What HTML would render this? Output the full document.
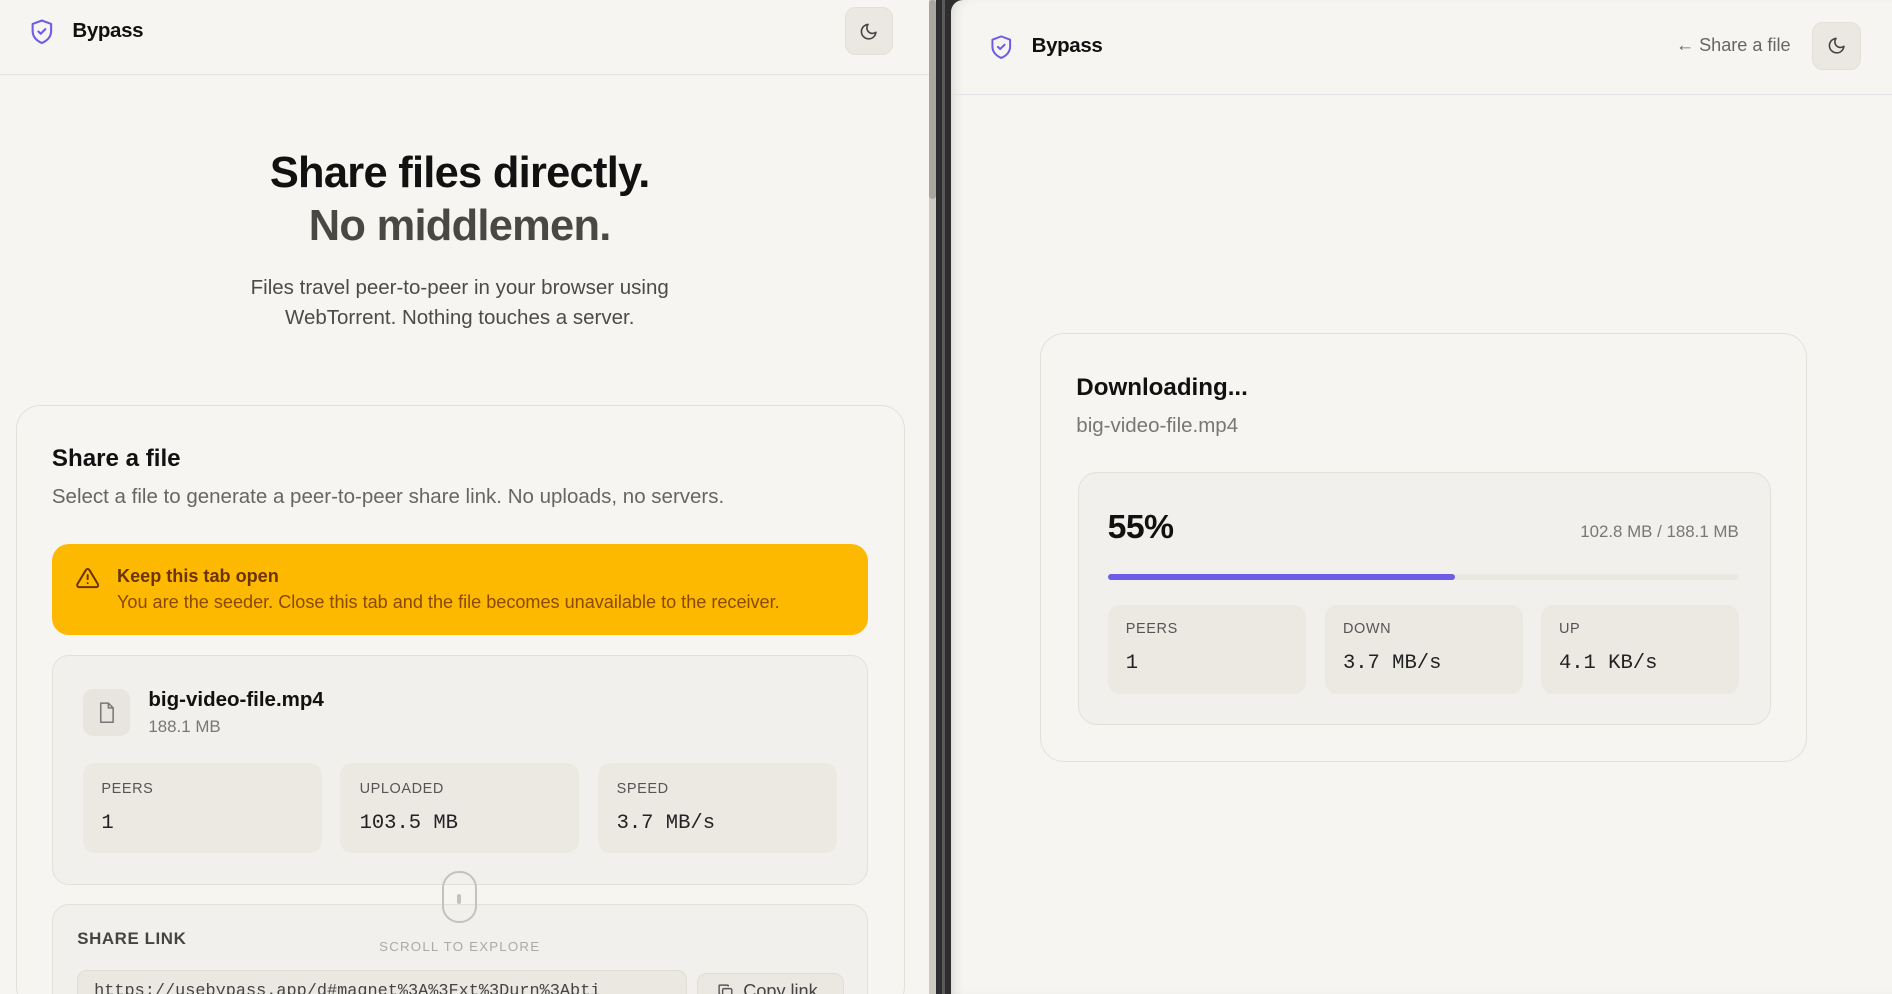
<!DOCTYPE html>
<html><head><meta charset="utf-8"><style>
html,body{margin:0;padding:0;}
body{width:1568px;height:824px;overflow:hidden;position:relative;zoom:1.20663;background:#2e2e2e;font-family:"Liberation Sans",sans-serif;color:#111;}
.a{position:absolute;}
.pane{background:#f7f5f1;overflow:hidden;}
.hdr{border-bottom:1px solid #e4e1e6;}
.moon{background:#ebe8e2;border-radius:9px;border:1px solid #e2dfd8;box-sizing:border-box;}
.brand{font-weight:bold;font-size:17px;letter-spacing:-0.3px;}
.stat{background:#ece9e3;border-radius:10px;}
.lbl{font-size:12px;color:#555;letter-spacing:0.5px;}
.val{font-family:"Liberation Mono",monospace;font-size:17px;color:#222;}
.c{text-align:center;}
</style></head><body>
<!-- left pane -->
<div class="a pane" style="left:0;top:0;width:770px;height:824px;">
  <div class="a hdr" style="left:0;top:0;width:770px;height:61px;"></div>
  <svg class="a" style="left:23px;top:14px" width="23" height="24" viewBox="0 0 24 24" fill="none" stroke="#6c5ce7" stroke-width="1.8" stroke-linejoin="round" stroke-linecap="round"><path d="M12 2.5 20 5.5v6c0 5-3.5 8.5-8 10.5-4.5-2-8-5.5-8-10.5v-6z"/><path d="M9 12l2 2 4-4"/></svg>
  <div class="a brand" style="left:60px;top:16px;">Bypass</div>
  <div class="a moon" style="left:700px;top:6px;width:40px;height:40px;"></div>
  <svg class="a" style="left:712px;top:18px" width="16" height="16" viewBox="0 0 24 24" fill="none" stroke="#444" stroke-width="2" stroke-linecap="round" stroke-linejoin="round"><path d="M21 12.8A9 9 0 1 1 11.2 3a7 7 0 0 0 9.8 9.8z"/></svg>

  <div class="a c" style="left:0;width:762px;top:122px;font-size:36px;font-weight:bold;letter-spacing:-0.6px;line-height:44px;">Share files directly.<br><span style="color:#4a4843">No middlemen.</span></div>
  <div class="a c" style="left:0;width:762px;top:226px;font-size:17px;line-height:25px;color:#4d4b47;">Files travel peer-to-peer in your browser using<br>WebTorrent. Nothing touches a server.</div>

  <div class="a" style="left:13px;top:336px;width:735px;height:500px;border:1px solid #e3e0da;border-radius:20px;"></div>
  <div class="a" style="left:43px;top:369px;font-size:20px;font-weight:bold;">Share a file</div>
  <div class="a" style="left:43px;top:402px;font-size:17px;color:#666;">Select a file to generate a peer-to-peer share link. No uploads, no servers.</div>

  <div class="a" style="left:43px;top:451px;width:676px;height:75px;background:#fdb900;border-radius:14px;"></div>
  <svg class="a" style="left:62px;top:469px" width="21" height="20" viewBox="0 0 24 24" fill="none" stroke="#6b3300" stroke-width="2" stroke-linecap="round" stroke-linejoin="round"><path d="M10.3 3.9 1.8 18a2 2 0 0 0 1.7 3h17a2 2 0 0 0 1.7-3L13.7 3.9a2 2 0 0 0-3.4 0z"/><path d="M12 9v4M12 17h.01"/></svg>
  <div class="a" style="left:97px;top:469px;font-size:15px;font-weight:bold;color:#6b3300;">Keep this tab open</div>
  <div class="a" style="left:97px;top:491px;font-size:15px;color:#8a4800;">You are the seeder. Close this tab and the file becomes unavailable to the receiver.</div>

  <div class="a" style="left:43px;top:543px;width:675px;height:189px;background:#f2f0ec;border:1px solid #e3e0da;border-radius:14px;"></div>
  <div class="a" style="left:69px;top:571px;width:39px;height:39px;background:#e8e5df;border-radius:8px;"></div>
  <svg class="a" style="left:79px;top:580px" width="19" height="21" viewBox="0 0 24 24" fill="none" stroke="#777" stroke-width="1.6" stroke-linejoin="round"><path d="M6 2h8l5 5v15H6z"/><path d="M14 2v5h5"/></svg>
  <div class="a" style="left:123px;top:570px;font-size:17px;font-weight:bold;">big-video-file.mp4</div>
  <div class="a" style="left:123px;top:594px;font-size:14px;color:#777;">188.1 MB</div>
  <div class="a stat" style="left:69px;top:632px;width:198px;height:75px;"></div>
  <div class="a stat" style="left:282px;top:632px;width:198px;height:75px;"></div>
  <div class="a stat" style="left:496px;top:632px;width:198px;height:75px;"></div>
  <div class="a lbl" style="left:84px;top:647px;">PEERS</div>
  <div class="a lbl" style="left:298px;top:647px;">UPLOADED</div>
  <div class="a lbl" style="left:511px;top:647px;">SPEED</div>
  <div class="a val" style="left:84px;top:673px;">1</div>
  <div class="a val" style="left:298px;top:673px;">103.5 MB</div>
  <div class="a val" style="left:511px;top:673px;">3.7 MB/s</div>

  <div class="a" style="left:43px;top:749px;width:675px;height:90px;background:#f2f0ec;border:1px solid #e3e0da;border-radius:14px;"></div>
  <div class="a" style="left:64px;top:770px;font-size:14px;font-weight:bold;color:#444;letter-spacing:0.5px;">SHARE LINK</div>
  <div class="a" style="left:64px;top:804px;width:504px;height:30px;background:#ebe8e2;border:1px solid #e0ddd6;border-radius:8px;"></div>
  <div class="a" style="left:78px;top:814px;font-family:'Liberation Mono',monospace;font-size:14px;color:#444;">https://usebypass.app/d#magnet%3A%3Fxt%3Durn%3Abti</div>
  <div class="a" style="left:578px;top:806px;width:120px;height:30px;background:#ebe8e2;border:1px solid #e0ddd6;border-radius:8px;"></div>
  <svg class="a" style="left:594px;top:815px" width="14" height="14" viewBox="0 0 24 24" fill="none" stroke="#555" stroke-width="2" stroke-linejoin="round"><rect x="8" y="8" width="13" height="13" rx="2"/><path d="M5 16H4a1 1 0 0 1-1-1V4a1 1 0 0 1 1-1h11a1 1 0 0 1 1 1v1"/></svg>
  <div class="a" style="left:616px;top:813px;font-size:15px;color:#444;">Copy link</div>
  <div class="a" style="left:366px;top:722px;width:26px;height:40px;border:2px solid #c4c2bd;border-radius:14px;"></div>
  <div class="a" style="left:379px;top:741px;width:3px;height:8px;background:#c4c2bd;border-radius:2px;"></div>
  <div class="a c" style="left:281px;width:200px;top:778px;font-size:11px;color:#aaa;letter-spacing:1px;">SCROLL TO EXPLORE</div>
</div>
<!-- scrollbar -->
<div class="a" style="left:770px;top:0;width:6px;height:824px;background:#cdcac1;"></div>
<div class="a" style="left:770px;top:0;width:6px;height:165px;background:#a9a69e;border-radius:3px;"></div>
<div class="a" style="left:781px;top:0;width:2px;height:824px;background:#5a5a5a;"></div>

<!-- right pane -->
<div class="a pane" style="left:788px;top:0;width:780px;height:824px;border-top-left-radius:10px;box-shadow:inset 8px 0 10px -6px rgba(0,0,0,0.12);">
  <div class="a hdr" style="left:0;top:0;width:780px;height:78px;"></div>
  <svg class="a" style="left:31px;top:27px" width="22" height="23" viewBox="0 0 24 24" fill="none" stroke="#6c5ce7" stroke-width="1.8" stroke-linejoin="round" stroke-linecap="round"><path d="M12 2.5 20 5.5v6c0 5-3.5 8.5-8 10.5-4.5-2-8-5.5-8-10.5v-6z"/><path d="M9 12l2 2 4-4"/></svg>
  <div class="a brand" style="left:67px;top:28px;">Bypass</div>
  <div class="a" style="left:601px;top:29px;font-size:15px;color:#666;">← Share a file</div>
  <div class="a moon" style="left:714px;top:18px;width:40px;height:40px;"></div>
  <svg class="a" style="left:726px;top:30px" width="16" height="16" viewBox="0 0 24 24" fill="none" stroke="#444" stroke-width="2" stroke-linecap="round" stroke-linejoin="round"><path d="M21 12.8A9 9 0 1 1 11.2 3a7 7 0 0 0 9.8 9.8z"/></svg>

  <div class="a" style="left:74px;top:276px;width:634px;height:354px;border:1px solid #e3e0da;border-radius:20px;"></div>
  <div class="a" style="left:104px;top:310px;font-size:20px;font-weight:bold;">Downloading...</div>
  <div class="a" style="left:104px;top:343px;font-size:17px;color:#777;">big-video-file.mp4</div>
  <div class="a" style="left:105px;top:391px;width:573px;height:208px;background:#f2f0ec;border:1px solid #e3e0da;border-radius:16px;"></div>
  <div class="a" style="left:130px;top:421px;font-size:28px;font-weight:bold;letter-spacing:-0.5px;">55%</div>
  <div class="a" style="right:127px;top:433px;font-size:14px;color:#777;">102.8 MB / 188.1 MB</div>
  <div class="a" style="left:130px;top:476px;width:523px;height:5px;background:#ebe8e2;border-radius:3px;"></div>
  <div class="a" style="left:130px;top:476px;width:288px;height:5px;background:#6c5ce7;border-radius:3px;"></div>
  <div class="a stat" style="left:130px;top:501px;width:164px;height:74px;"></div>
  <div class="a stat" style="left:310px;top:501px;width:164px;height:74px;"></div>
  <div class="a stat" style="left:489px;top:501px;width:164px;height:74px;"></div>
  <div class="a lbl" style="left:145px;top:515px;">PEERS</div>
  <div class="a lbl" style="left:325px;top:515px;">DOWN</div>
  <div class="a lbl" style="left:504px;top:515px;">UP</div>
  <div class="a val" style="left:145px;top:540px;">1</div>
  <div class="a val" style="left:325px;top:540px;">3.7 MB/s</div>
  <div class="a val" style="left:504px;top:540px;">4.1 KB/s</div>
</div>
</body></html>
